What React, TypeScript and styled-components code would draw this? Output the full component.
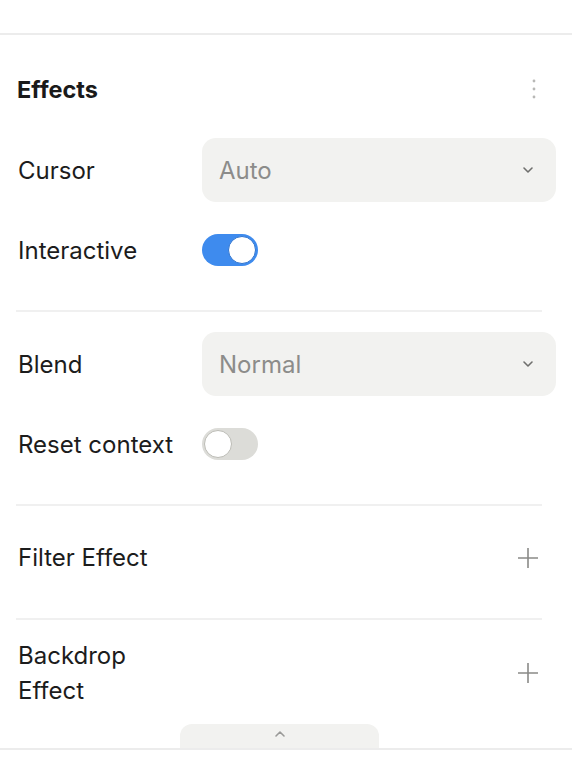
import React, { useState } from "react";
import styled, { createGlobalStyle } from "styled-components";

const GlobalStyle = createGlobalStyle`
  html, body {
    margin: 0;
    padding: 0;
    background: #ffffff;
  }
  body {
    font-family: Inter, "Noto Sans", sans-serif;
    color: #1c1c1c;
  }
`;

const Page = styled.div`
  width: 572px;
  height: 772px;
  display: flex;
  flex-direction: column;
  overflow: hidden;
`;

const TopBar = styled.div`
  height: 33px;
  flex: none;
  border-bottom: 2px solid #ececec;
`;

const Panel = styled.div`
  flex: 1;
  padding: 0 16px;
  display: flex;
  flex-direction: column;
`;

const TitleRow = styled.div`
  height: 40px;
  margin: 34px 0 29px;
  display: flex;
  align-items: center;
  justify-content: space-between;
`;

const Title = styled.h2`
  margin: 0 0 0 1px;
  font-size: 23.5px;
  font-weight: 700;
  color: #1a1a1a;
`;

const Kebab = styled.button`
  border: none;
  background: none;
  padding: 0;
  margin-right: 16px;
  width: 12px;
  height: 24px;
  display: flex;
  align-items: center;
  justify-content: center;
`;

const Section = styled.div<{ $top?: number; $bottom?: number }>`
  display: flex;
  flex-direction: column;
  padding-top: ${({ $top }) => $top ?? 0}px;
  padding-bottom: ${({ $bottom }) => $bottom ?? 44}px;
  margin-right: 14px;
  border-bottom: 2px solid #f0f0f0;
`;

const SectionInner = styled.div`
  margin-right: -14px;
  display: flex;
  flex-direction: column;
  gap: 32px;
`;

const Row = styled.div<{ $h: number }>`
  height: ${({ $h }) => $h}px;
  display: flex;
  align-items: center;
`;

const Label = styled.span`
  width: 184px;
  flex: none;
  padding-left: 2px;
  font-size: 24px;
  line-height: 35px;
`;

const Select = styled.button`
  flex: 1;
  height: 64px;
  border: none;
  border-radius: 14px;
  background: #f2f2f0;
  display: flex;
  align-items: center;
  justify-content: space-between;
  padding: 0 22px 0 17px;
  font-family: inherit;
  font-size: 24px;
  color: #8c8c8a;
  cursor: pointer;
`;

const Track = styled.button<{ $on: boolean }>`
  position: relative;
  width: 56px;
  height: 32px;
  border: none;
  padding: 0;
  border-radius: 16px;
  background: ${({ $on }) => ($on ? "#3e8bee" : "#dcdcd8")};
  cursor: pointer;
`;

const Knob = styled.span<{ $on: boolean }>`
  position: absolute;
  top: 2px;
  left: ${({ $on }) => ($on ? "26px" : "2px")};
  width: 28px;
  height: 28px;
  box-sizing: border-box;
  border-radius: 50%;
  background: #ffffff;
  border: 1.5px solid ${({ $on }) => ($on ? "#2f74cf" : "#bcbcb6")};
`;

const AddRow = styled.div<{ $pt: number; $pb: number }>`
  display: flex;
  align-items: center;
  justify-content: space-between;
  padding: ${({ $pt, $pb }) => `${$pt}px 0 ${$pb}px`};
`;

const AddLabel = styled(Label)`
  width: 150px;
`;

const PlusButton = styled.button`
  border: none;
  background: none;
  padding: 0;
  margin-right: 3px;
  width: 22px;
  height: 22px;
  display: flex;
  align-items: center;
  justify-content: center;
  cursor: pointer;
`;

const Footer = styled.div`
  flex: none;
  height: 48px;
  display: flex;
  flex-direction: column;
`;

const CollapseTab = styled.button`
  align-self: flex-start;
  margin-left: 180px;
  width: 199px;
  height: 24px;
  border: none;
  border-radius: 12px 12px 0 0;
  background: #f2f2f0;
  display: flex;
  align-items: center;
  justify-content: center;
  padding: 0 0 4px;
  cursor: pointer;
`;

const BottomLine = styled.div`
  height: 2px;
  background: #ececec;
`;

const Chevron = ({ up }: { up?: boolean }) => (
  <svg width="12" height="8" viewBox="0 0 12 8">
    <path
      d={up ? "M2 6 L6 2 L10 6" : "M2 2 L6 6 L10 2"}
      fill="none"
      stroke={up ? "#9a9a98" : "#6f6f6d"}
      strokeWidth="1.6"
      strokeLinecap="round"
      strokeLinejoin="round"
    />
  </svg>
);

const Plus = () => (
  <svg width="22" height="22" viewBox="0 0 22 22">
    <path d="M11 1 V21 M1 11 H21" stroke="#8a8a88" strokeWidth="1.6" />
  </svg>
);

const Dots = () => (
  <svg width="4" height="20" viewBox="0 0 4 20">
    <circle cx="2" cy="2" r="1.4" fill="#b8b8b6" />
    <circle cx="2" cy="10" r="1.4" fill="#b8b8b6" />
    <circle cx="2" cy="18" r="1.4" fill="#b8b8b6" />
  </svg>
);

function Toggle({ on, onChange }: { on: boolean; onChange: (v: boolean) => void }) {
  return (
    <Track $on={on} onClick={() => onChange(!on)}>
      <Knob $on={on} />
    </Track>
  );
}

export default function App() {
  const [interactive, setInteractive] = useState(true);
  const [resetContext, setResetContext] = useState(false);

  return (
    <Page>
      <GlobalStyle />
      <TopBar />
      <Panel>
        <TitleRow>
          <Title>Effects</Title>
          <Kebab aria-label="More">
            <Dots />
          </Kebab>
        </TitleRow>

        <Section>
          <SectionInner>
            <Row $h={64}>
              <Label>Cursor</Label>
              <Select>
                Auto
                <Chevron />
              </Select>
            </Row>
            <Row $h={32}>
              <Label>Interactive</Label>
              <Toggle on={interactive} onChange={setInteractive} />
            </Row>
          </SectionInner>
        </Section>

        <Section $top={20}>
          <SectionInner>
            <Row $h={64}>
              <Label>Blend</Label>
              <Select>
                Normal
                <Chevron />
              </Select>
            </Row>
            <Row $h={32}>
              <Label>Reset context</Label>
              <Toggle on={resetContext} onChange={setResetContext} />
            </Row>
          </SectionInner>
        </Section>

        <Section $bottom={0}>
          <AddRow $pt={34} $pb={43}>
            <AddLabel>Filter Effect</AddLabel>
            <PlusButton aria-label="Add filter effect">
              <Plus />
            </PlusButton>
          </AddRow>
        </Section>

        <AddRow $pt={18} $pb={0} style={{ marginRight: 14 }}>
          <AddLabel>Backdrop Effect</AddLabel>
          <PlusButton aria-label="Add backdrop effect">
            <Plus />
          </PlusButton>
        </AddRow>
      </Panel>
      <Footer>
        <CollapseTab aria-label="Collapse">
          <Chevron up />
        </CollapseTab>
        <BottomLine />
      </Footer>
    </Page>
  );
}
